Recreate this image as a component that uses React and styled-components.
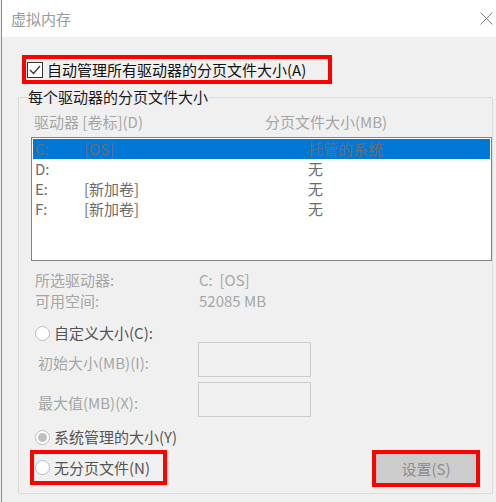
import styled, { createGlobalStyle } from "styled-components";

const GlobalStyle = createGlobalStyle`
  body {
    margin: 0;
    background: #f0f0f0;
    font-family: "Noto Sans CJK SC", "Noto Sans", sans-serif;
    font-size: 15px;
  }
`;

const drives = [
  { letter: "C:", label: "[OS]", size: "托管的系统", selected: true },
  { letter: "D:", label: "", size: "无" },
  { letter: "E:", label: "[新加卷]", size: "无" },
  { letter: "F:", label: "[新加卷]", size: "无" },
];

const App = () => {
  return (
    <>
      <GlobalStyle />
      <Window>
        <TitleBar>
          <Title>虚拟内存</Title>
          <CloseIcon width="13" height="13" viewBox="0 0 13 13">
            <path d="M0.5 0.5 L12.5 12.5 M12.5 0.5 L0.5 12.5" stroke="#808080" strokeWidth="1" fill="none" />
          </CloseIcon>
        </TitleBar>

        <Body>
          <Mark $width="310px" $height="29px" $ml="20px">
            <CheckRow>
              <CheckBox>
                <svg width="14" height="14" viewBox="0 0 14 14">
                  <path d="M2 7 L5.5 10.5 L12 3" stroke="#333" strokeWidth="1.2" fill="none" />
                </svg>
              </CheckBox>
              自动管理所有驱动器的分页文件大小(A)
            </CheckRow>
          </Mark>

          <Group>
            <Legend>每个驱动器的分页文件大小</Legend>

            <ListHeader>
              <span>驱动器 [卷标](D)</span>
              <span>分页文件大小(MB)</span>
            </ListHeader>

            <ListBox>
              {drives.map((d) => (
                <DriveRow key={d.letter} $selected={d.selected}>
                  <span>{d.letter}</span>
                  <span>{d.label}</span>
                  <span>{d.size}</span>
                </DriveRow>
              ))}
            </ListBox>

            <InfoGrid>
              <span>所选驱动器:</span>
              <span>C:&nbsp;&nbsp;[OS]</span>
              <span>可用空间:</span>
              <span>52085 MB</span>
            </InfoGrid>

            <RadioRow $mt="12px">
              <RadioDot />
              自定义大小(C):
            </RadioRow>

            <SizeRow $mt="-1px">
              <SizeLabel>初始大小(MB)(I):</SizeLabel>
              <SizeInput />
            </SizeRow>
            <SizeRow $mt="5px">
              <SizeLabel>最大值(MB)(X):</SizeLabel>
              <SizeInput />
            </SizeRow>

            <RadioRow $mt="10px">
              <RadioDot $checked />
              系统管理的大小(Y)
            </RadioRow>

            <BottomRow>
              <Mark $width="137px" $height="35px">
                <RadioRow $mt="0" $ml="1px">
                  <RadioDot />
                  无分页文件(N)
                </RadioRow>
              </Mark>
              <Mark $width="108px" $height="37px">
                <SetButton>设置(S)</SetButton>
              </Mark>
            </BottomRow>
          </Group>
        </Body>
      </Window>
    </>
  );
};

//Styling

const Window = styled.div`
  width: 494px;
  height: 502px;
  margin-left: 1px;
  border-left: 1px solid #8a8a8a;
  background: #f0f0f0;
  overflow: hidden;
`;

const TitleBar = styled.div`
  height: 37px;
  background: #ffffff;
  display: flex;
  align-items: center;
  justify-content: space-between;
  padding: 0 3px 0 9px;
`;

const Title = styled.div`
  color: #9a9a9a;
  font-size: 15px;
  line-height: 20px;
`;

const CloseIcon = styled.svg`
  margin-top: -1px;
`;

const Body = styled.div`
  padding-top: 18px;
`;

const Mark = styled.div`
  box-sizing: border-box;
  width: ${(p) => p.$width};
  height: ${(p) => p.$height};
  margin-left: ${(p) => p.$ml || "0"};
  border: 4px solid #ff0000;
  display: flex;
  align-items: center;
`;

const CheckRow = styled.label`
  display: flex;
  align-items: center;
  gap: 4px;
  padding-left: 1px;
  color: #111;
  line-height: 20px;
`;

const CheckBox = styled.span`
  box-sizing: border-box;
  width: 16px;
  height: 16px;
  border: 1px solid #333;
  background: #fff;
  display: flex;
  align-items: center;
  justify-content: center;
`;

const Group = styled.fieldset`
  box-sizing: border-box;
  width: 475px;
  margin: 3px 0 0 16px;
  padding: 0 0 6px 0;
  border: 1px solid #dcdcdc;
  min-width: 0;
`;

const Legend = styled.legend`
  margin-left: 8px;
  padding: 0 1px;
  line-height: 20px;
  color: #1a1a1a;
`;

const ListHeader = styled.div`
  display: grid;
  grid-template-columns: 231px auto;
  margin-top: 5px;
  padding-left: 15px;
  line-height: 20px;
  color: #a6a6a6;
`;

const ListBox = styled.div`
  box-sizing: border-box;
  height: 124px;
  margin: 5px 0 0 12px;
  padding: 1px;
  border: 1px solid #828282;
  background: #ffffff;
`;

const DriveRow = styled.div`
  display: grid;
  grid-template-columns: 49px 224px auto;
  height: 20px;
  line-height: 20px;
  padding-left: 2px;
  color: #6d6d6d;
  background: ${(p) => (p.$selected ? "#0078d7" : "transparent")};
`;

const InfoGrid = styled.div`
  display: grid;
  grid-template-columns: 164px auto;
  margin: 8px 0 0 16px;
  line-height: 21px;
  color: #a6a6a6;
`;

const RadioRow = styled.label`
  display: flex;
  align-items: center;
  gap: 4px;
  margin-top: ${(p) => p.$mt};
  margin-left: ${(p) => p.$ml || "16px"};
  line-height: 20px;
  color: #555;
`;

const RadioDot = styled.span`
  box-sizing: border-box;
  width: 15px;
  height: 15px;
  border-radius: 50%;
  border: 1px solid #bcbcbc;
  background: #ffffff;
  display: flex;
  align-items: center;
  justify-content: center;
  &::after {
    content: "";
    display: ${(p) => (p.$checked ? "block" : "none")};
    width: 9px;
    height: 9px;
    border-radius: 50%;
    background: #c0c0c0;
  }
`;

const SizeRow = styled.div`
  display: flex;
  align-items: center;
  margin: ${(p) => p.$mt} 0 0 19px;
`;

const SizeLabel = styled.span`
  width: 160px;
  padding-top: 6px;
  line-height: 20px;
  color: #a6a6a6;
`;

const SizeInput = styled.div`
  box-sizing: border-box;
  width: 113px;
  height: 35px;
  border: 1px solid #cccccc;
  background: #f0f0f0;
`;

const BottomRow = styled.div`
  display: flex;
  justify-content: space-between;
  align-items: flex-start;
  margin-top: 3px;
  padding: 0 12px 0 11px;
`;

const SetButton = styled.div`
  flex: 1;
  align-self: stretch;
  background: #cccccc;
  color: #8c8c8c;
  display: flex;
  align-items: center;
  justify-content: center;
  line-height: 20px;
`;

export default App;
